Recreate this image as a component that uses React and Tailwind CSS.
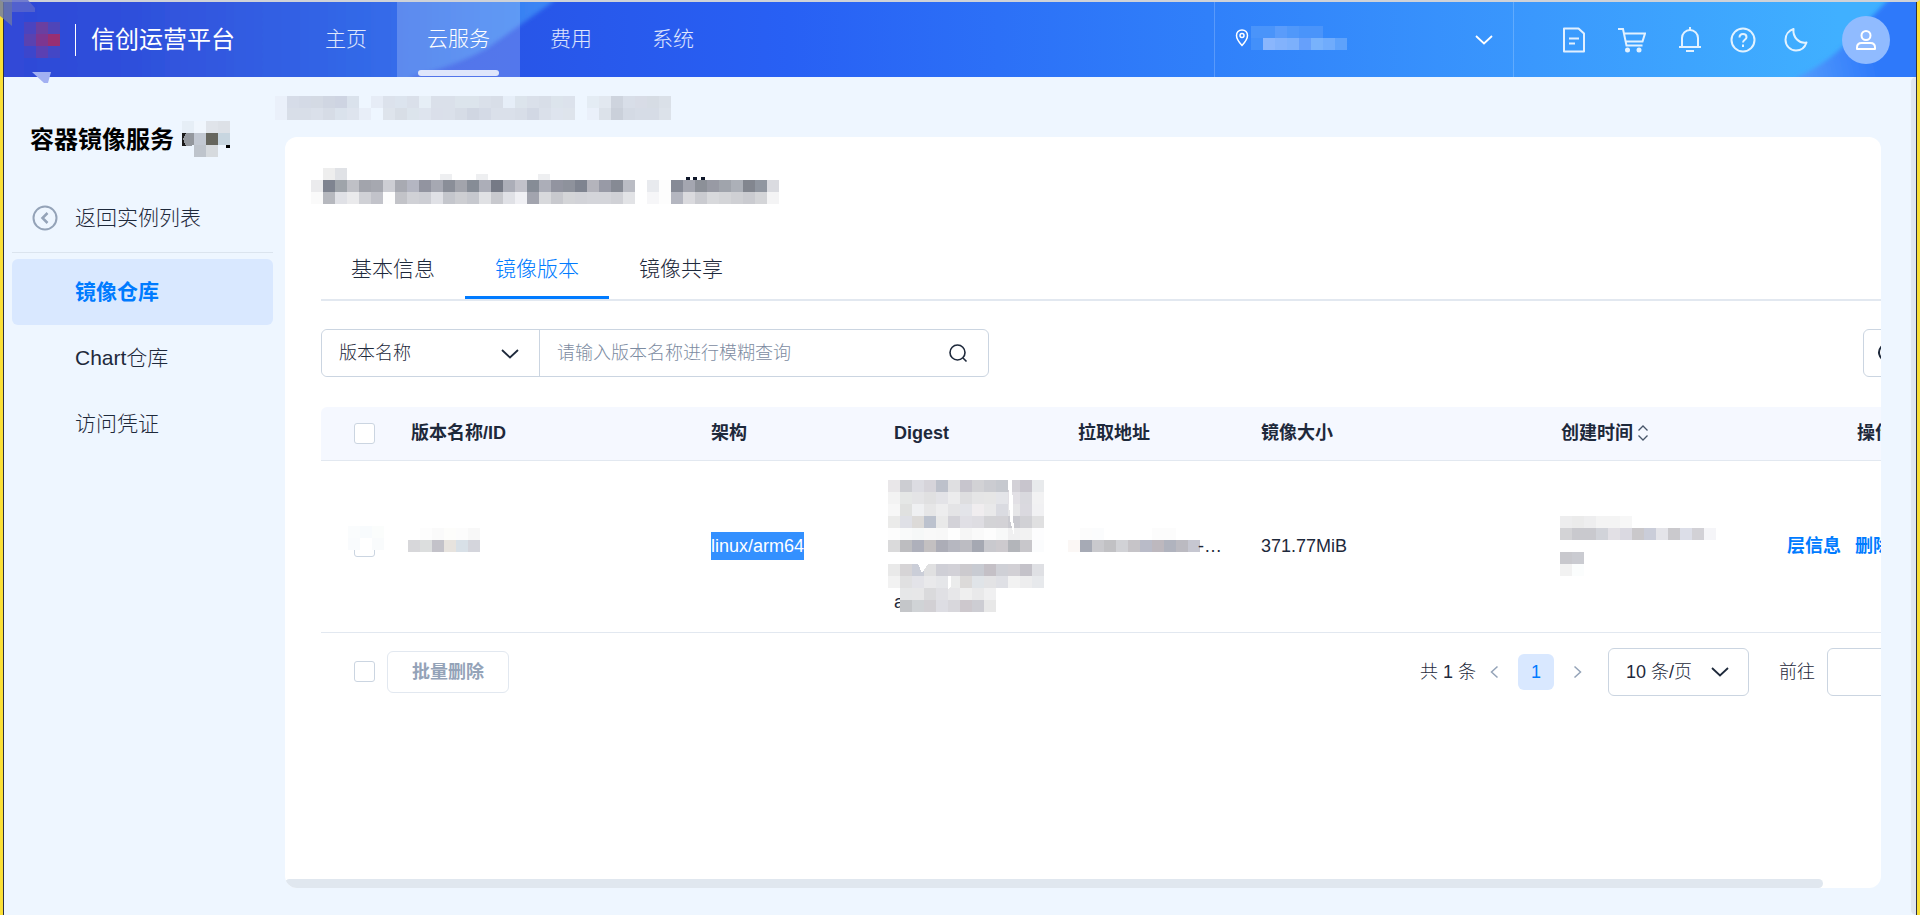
import { useState } from 'react';

const CELL = 12;

const LOGO = [
  '4a44c0 6a3fa0 4f45b8',
  '5a42b0 7d3690 982f72',
  '3c46cc 5b40b2 4347c6',
];

const REGION = [
  '4a94fa 4a94fa 5a9cfb 5098fa 4a94fa 4a94fa . .',
  '4390fa 8ab6fd 82b2fc 7cb0fc 66a0fb 78b2fc 70acfc 5ea2fb',
];

const SERVICE_NAME = [
  'e6eef6 f0f6fd e0e4ea dde1e7',
  '94989e c2c8d2 66665e c8d6e0',
  '. bec4cc d6dade .',
];

const CRUMBS = [
  'eaf0fa d6dce8 d4dae6 d4dae4 d0d6e2 ced4e2 dae2ec . e6ecf6 dce2ec dce4ee dae0ea e6eef6 dae0ea dae0ea dce4ec dce4ec dae0ea d8dee8 e6eef8 dce4ec dae0ea d8dee8 dce4ec dce2ec . e4ecf4 e2e8f0 ced4de d8dee8 d8dce6 d6dce4 dae0e8',
  'eaf0fa d8dee8 d8dee8 dae0ea d6dce6 dae2ec dee4ee e8eef8 . dee4ec d8dee6 dce4ec dee4ee dadfea dae0ea d6dce6 d0d6e2 d4dae6 dae0ea dae0ea d8dee8 d2d8e4 dae0ea dee4ee dee4ec . eaf0fa dce2ea cad0da d4dae4 d6dce6 d6dce6 dce2ea',
];

const TITLE = [
  '. eeeeee e0e2e6 . . . . . . . . . . . . . . . . . . . . . . . . . . . . . . . . . . . .',
  'ebebed 7f8490 9fa4aa bfc0c6 a2a4ac a6a8b0 cdced4 a8aab2 b4b6c2 9294a0 a6a8b2 8a8e98 a2a4ac 868c96 acaeb8 767a86 acaeb8 c2c2ca 868c96 acaeb8 9294a0 8e929c 7f8490 b4b4bc 989aa6 868a94 babcc4 . e8eaee fdfdfd 868a96 a4a6b0 8c9098 989aa4 a0a4ac acb0b8 82868f 9096a0 dadbe0',
  'fafafa b6b8be e0e1e6 eaeaec d0d1d6 c2c3ca fdfdfd c2c3c8 d0d1d6 cdced4 e0e1e6 c4c6cc cdced2 c6c8ce e0e1e4 c8c9ce e0e1e6 f0f0f4 a2a4ae d8d9dc c8c9ce d4d5d8 d2d3d8 d4d5da d4d5da d0d1d6 e2e3e6 . f6f6f8 fdfdfd b4b6c0 dadade cacbd0 d8d9dc d4d5d8 cfd0d4 cacbd0 d4d5d8 f4f4f5',
];

const ROW_CHECK = ['fafcfd f8fbfd fbfdfc', 'f9fbfd ffffff f9fbfc'];

const VERSION = [
  '. fdfdfd fafafa fdfdfb fcfcfc f8f8f8',
  'd7d7da dcdede c3c2c9 e7e3de d8e0e7 d4d5dc',
  '. . . . . .',
];

const DIGEST = [
  'e9e7e9 cccdd2 dcdce2 d6d4da bdc1cb dfdfe1 c7c5cd d2d2d5 cbccd1 c6c9cf d3d1d7 c8c5cd e8eaec',
  'f3f3f3 e5e7e6 e4e4e6 e0e0e1 e3e3e7 ececed dedee0 e5e5e6 e6e6e6 e4e5e9 e2e0e5 d9d9de f2f2f3',
  'f7f7f7 e0e1e0 eff0f2 e6e6e7 ededee e4e4e6 e3e4e9 f0edef e9e9ea dadbe1 e6e6e8 dad9df f1f1f3',
  'ebebea dfe0e6 dcdad8 bcc2ce e9e9e9 d3d2d8 e0dfe5 dedde2 d3d3d6 d3d2d6 cacad0 d1d1d5 e0e0e1',
  'fdfdfd f9fafa f6f8f8 f9f9f9 f8f8f8 fefefe f6f6f6 fafafa fdfdfd f8f9f9 f0f0f1 f2f2f2 fdfdfe',
  'dadadb bdbdc0 aeb0bb c3c0c1 acadb7 b6b7c0 bcbcc2 a5a8b2 c9c9ce cdcace b3b5ba c8c7cb fbfcfd',
  '. . . . . . . . . . . . .',
  'e9e9e9 d6d4d6 cbced8 e0e0e1 cfcfd6 d2d1d7 cccace c8cbd2 c4c0c6 cfd0d6 d2d0d5 c4c2c9 dfe0e4',
  'f2f2f2 e0e0e1 e3e3e8 e9e9eb e5e6e9 ebecec dcdad9 e0e4e8 e3e3e5 dfe0e5 f2f2f2 ededee e7e9ec',
  '. e6e7e8 e7e7e8 dadadc e0e0e4 e7e7e9 efefef e9e9ea f0f0f1 . . . .',
  '. c4c6c9 d0d3d6 d2d0d4 dddde3 d8d7dc cdc8cd cdcdd3 e8e8e8 . . . .',
];

const ADDRESS = [
  '. fcfcfc fbfcfd . . . . fcfcfc fcfcfc . .',
  'fbf7f5 a6aab5 c9c9cd c1c1c4 d1d2d6 c6c4c8 b9bbc8 bdb8be b0b3be bbbac1 c6c7d1',
  '. . . . . . . . . . .',
];

const CREATED = [
  'ededee ebebeb eeeeef f4f4f4 f4f4f4 f7f7f7 . . . . . . .',
  'd3d3d6 c9c9ce c9c9ce d1d3d9 e2e0e5 dad9e1 cac8cb cacdd9 e4e4e9 cac9cd dcdee8 d2d1d6 f5f5f8',
  '. . . . . . . . . . . . .',
  'c8c8cd cacbd1 . . . . . . . . . . .',
  'f2f2f2 fbfdfd . . . . . . . . . . .',
];

/* Privacy blur drawn as a grid of flat tiles, "." leaves a hole */
function Mosaic({ rows, className = '', children }) {
  const grid = rows.map(r => r.split(' '));
  const w = grid[0].length * CELL;
  const h = grid.length * CELL;
  return (
    <svg width={w} height={h} viewBox={`0 0 ${w} ${h}`} shapeRendering="crispEdges" aria-hidden="true" className={`shrink-0 ${className}`}>
      {grid.map((cells, y) =>
        cells.map((c, x) => c !== '.' && (
          <rect key={`${x}-${y}`} x={x * CELL} y={y * CELL} width={CELL} height={CELL} fill={`#${c}`} />
        ))
      )}
      {children}
    </svg>
  );
}

function Icon({ w = 26, h = 26, sw = 2, className = '', children }) {
  return (
    <svg width={w} height={h} viewBox={`0 0 ${w} ${h}`} fill="none" stroke="currentColor" strokeWidth={sw} aria-hidden="true" className={`shrink-0 ${className}`}>
      {children}
    </svg>
  );
}

const Chevron = ({ className = '' }) => (
  <Icon w={18} h={12} sw={1.8} className={className}><path d="M1 2 9 9.500 17 2" /></Icon>
);

function Checkbox({ label }) {
  return (
    <input
      type="checkbox"
      aria-label={label}
      className="block size-[21px] shrink-0 appearance-none rounded-[3px] border border-[#cbd5e1] bg-white checked:border-[#007bff] checked:bg-[#007bff]"
    />
  );
}

function HeaderBackdrop() {
  return (
    <svg className="absolute inset-0 h-full w-full" viewBox="0 0 1910 75" preserveAspectRatio="none" aria-hidden="true">
      <defs>
        <linearGradient id="base">
          <stop offset="0.22" stopColor="#2852e4" />
          <stop offset="0.41" stopColor="#2860f4" />
          <stop offset="0.63" stopColor="#3080fa" />
          <stop offset="0.8" stopColor="#3a98fd" />
          <stop offset="0.96" stopColor="#40b0ff" />
        </linearGradient>
        <linearGradient id="left">
          <stop offset="0" stopColor="#3048d6" />
          <stop offset="0.25" stopColor="#2f4fdb" />
          <stop offset="0.7" stopColor="#346be9" />
          <stop offset="1" stopColor="#3b88f6" />
        </linearGradient>
        <linearGradient id="right" gradientUnits="userSpaceOnUse" x1="1800" y1="75" x2="1870" y2="60">
          <stop offset="0" stopColor="#5098fc" />
          <stop offset="1" stopColor="#2e79fa" />
        </linearGradient>
        <filter id="soft" x="-5%" y="-5%" width="110%" height="110%">
          <feGaussianBlur stdDeviation="2" />
        </filter>
      </defs>
      <rect width="1910" height="75" fill="url(#base)" />
      <path d="M-20-10h576l-8 10-62 44q-28 18-80 31v10H-20z" fill="url(#left)" filter="url(#soft)" />
      <path d="M1890-10h40v95h-146l8-10q34-16 56-42z" fill="url(#right)" filter="url(#soft)" />
    </svg>
  );
}

const NAV = ['主页', '云服务', '费用', '系统'];

function Header() {
  const [active, setActive] = useState('云服务');
  return (
    <header className="relative flex h-[75px] shrink-0 text-[21px] text-white">
      <HeaderBackdrop />
      <div className="relative flex items-center pl-5">
        <Mosaic rows={LOGO} />
        <span className="mr-[15px] ml-[15px] h-8 w-px bg-white" />
        <span className="text-2xl">信创运营平台</span>
      </div>
      <nav className="relative ml-[60px] flex font-light">
        {NAV.map(n => (
          <a
            key={n}
            href="#"
            onClick={() => setActive(n)}
            className={`relative flex items-center px-[30px] ${n === active ? 'bg-white/20 text-white' : 'text-white/85'}`}
          >
            {n}
            {n === active && <span className="absolute bottom-px left-[21px] right-[21px] h-1.5 rounded-[3px] bg-[#dfe6fb]" />}
          </a>
        ))}
      </nav>

      <button className="relative ml-auto flex w-[300px] items-center border-x border-white/20 pr-5 pl-5" aria-label="区域">
        <Icon w={14} h={18} className="mb-1">
          <path d="M7 1C3.700 1 1.500 3.400 1.500 6.500 1.500 10.500 7 16.500 7 16.500s5.500-6 5.500-10C12.500 3.400 10.300 1 7 1z" strokeWidth="1.500" />
          <circle cx="7" cy="6.500" r="2" strokeWidth="1.500" />
        </Icon>
        <Mosaic rows={REGION} className="mb-1 ml-0.5" />
        <Chevron className="ml-auto" />
      </button>

      <div className="relative flex items-center pr-[26px] pl-12 text-white/85">
        <div className="flex gap-8">
          <button aria-label="文档">
            <Icon w={24}>
              <path d="M2 1.500h14.500l5.500 5V24.500H2z" strokeLinejoin="round" />
              <path d="M7 11.500h10M7 16.500h6" />
            </Icon>
          </button>
          <button aria-label="购物车">
            <Icon w={28}>
              <path d="M0 2h5l3.500 16.500h16M5.800 6.500H27l-2.500 8H8" />
              <circle cx="9.500" cy="23" r="2.500" fill="currentColor" stroke="none" />
              <circle cx="21" cy="23" r="2.500" fill="currentColor" stroke="none" />
            </Icon>
          </button>
          <button aria-label="通知">
            <Icon w={24}>
              <path d="M1 20h22M4 20v-9a8 8 0 0 1 16 0v9M12 0v3M8 24h8" />
            </Icon>
          </button>
        </div>
        <div className="ml-7 flex gap-7">
          <button aria-label="帮助">
            <Icon>
              <circle cx="13" cy="13" r="11.500" />
              <path d="M9.500 10.500c0-2.200 1.500-3.500 3.500-3.500s3.500 1.300 3.500 3.200c0 2.500-3.500 2.600-3.500 5.300M13 17.500V20" />
            </Icon>
          </button>
          <button aria-label="深色模式">
            <Icon w={24}>
              <path d="M9.500 2C4.800 3.500 1.500 7.700 1.500 12.700c0 6 4.700 10.800 10.500 10.800 5 0 9-3.300 10.500-8-7 1.500-14-5-13-13.500z" strokeLinejoin="round" />
            </Icon>
          </button>
        </div>
        <button aria-label="用户" className="ml-[34px] flex size-12 items-center justify-center rounded-full bg-[#90bbff] text-white">
          <Icon w={20} h={20}>
            <circle cx="10" cy="5.500" r="4.500" />
            <path d="M1 19v-1.500c0-3 2-4.500 4.500-4.500h9c2.500 0 4.500 1.500 4.500 4.500V19z" strokeLinejoin="round" />
          </Icon>
        </button>
      </div>
    </header>
  );
}

const MENU = ['镜像仓库', 'Chart仓库', '访问凭证'];

function Sidebar() {
  return (
    <aside className="w-[269px] shrink-0 pl-2 text-[21px] leading-7 text-[#1e293b]">
      <h1 className="flex h-[90px] items-end pl-[18px] text-2xl font-bold text-black">
        <span className="mb-[11px]">容器镜像服务</span>
        <Mosaic rows={SERVICE_NAME} className="mb-2.5 ml-2">
          <path d="M0 12h6l-5 6 5 7H0z" fill="#1a1a1a" />
          <path d="M4 12h6l-6 6 6 7H4l-3-7z" fill="#94989e" />
          <path d="M44 24h4v3h-4z" fill="#000" />
        </Mosaic>
      </h1>
      <a href="#" className="flex h-[86px] items-center border-b border-[#dbe4ee] pt-4 pl-5 font-light">
        <Icon className="text-[#94a3b8]">
          <circle cx="13" cy="13" r="11.500" />
          <path d="m15.500 8-5 5 5 5" strokeWidth="2.500" />
        </Icon>
        <span className="ml-[17px]">返回实例列表</span>
      </a>
      <nav className="mt-1.5">
        {MENU.map((m, i) => (
          <a
            key={m}
            href="#"
            className={`flex h-[66px] items-center rounded-md pl-[63px] ${i === 0 ? 'bg-[#d9e8ff] font-bold text-[#007bff]' : 'font-light'}`}
          >
            {m}
          </a>
        ))}
      </nav>
    </aside>
  );
}

const TABS = ['基本信息', '镜像版本', '镜像共享'];

function Tabs() {
  const [tab, setTab] = useState('镜像版本');
  return (
    <div role="tablist" className="flex h-[62px] border-b-2 border-[#e2e8f0] text-[21px] font-light">
      {TABS.map(t => (
        <button
          key={t}
          role="tab"
          aria-selected={t === tab}
          onClick={() => setTab(t)}
          className={`border-b-[3px] px-[30px] pt-1 ${t === tab ? 'border-[#007bff] text-[#007bff]' : 'border-transparent'}`}
        >
          {t}
        </button>
      ))}
    </div>
  );
}

function Toolbar() {
  return (
    <div className="mt-7 flex h-12 font-light">
      <div className="flex w-[668px] rounded-md border border-[#cbd5e1]">
        <div className="relative w-[218px] border-r border-[#cbd5e1]">
          <select aria-label="查询字段" className="h-full w-full appearance-none rounded-l-md bg-white px-[17px] outline-none">
            <option>版本名称</option>
          </select>
          <Chevron className="pointer-events-none absolute top-[18px] right-5" />
        </div>
        <input
          type="text"
          aria-label="版本名称"
          placeholder="请输入版本名称进行模糊查询"
          className="min-w-0 flex-1 bg-transparent px-[17px] outline-none placeholder:text-[#7c8ba1]"
        />
        <button aria-label="查询" className="px-5">
          <Icon w={20} h={20} sw={1.6}>
            <circle cx="9.500" cy="9.500" r="7.500" />
            <path d="m15 15 3.500 3.500" />
          </Icon>
        </button>
      </div>
      <button aria-label="刷新" className="ml-auto flex w-12 items-center justify-center rounded-md border border-[#cbd5e1]">
        <Icon w={20} h={20}>
          <path d="M17 5.500A8 8 0 1 0 18 10M17.500 1.500v4.500H13" />
        </Icon>
      </button>
    </div>
  );
}

function VersionTable() {
  return (
    <table className="mt-[30px] w-full table-fixed border-collapse text-left">
      <colgroup>
        <col className="w-[72px]" />
        <col className="w-[300px]" />
        <col className="w-[183px]" />
        <col className="w-[184px]" />
        <col className="w-[183px]" />
        <col className="w-[300px]" />
        <col />
        <col className="w-[142px]" />
      </colgroup>
      <thead>
        <tr className="h-[53px] border-b border-[#e2e8f0] bg-[#f5f8ff] font-bold">
          <th className="rounded-tl-md pl-[33px]"><Checkbox label="全选" /></th>
          <th className="px-[18px]">版本名称/ID</th>
          <th className="px-[18px]">架构</th>
          <th className="px-[18px]">Digest</th>
          <th className="px-[18px]">拉取地址</th>
          <th className="px-[18px]">镜像大小</th>
          <th className="px-[18px]">
            <button className="flex items-center font-bold">
              创建时间
              <Icon w={12} h={16} sw={1.3} className="ml-1 text-[#475569]">
                <path d="M1.500 5.500 6 1l4.500 4.500M1.500 10.500 6 15l4.500-4.500" />
              </Icon>
            </button>
          </th>
          <th className="px-[18px] text-right">操作</th>
        </tr>
      </thead>
      <tbody>
        <tr className="h-[172px] border-b border-[#e2e8f0]">
          <td className="pl-[33px]">
            <div className="relative">
              <Checkbox label="选择版本" />
              <Mosaic rows={ROW_CHECK} className="pointer-events-none absolute -top-2.5 -left-1.5" />
            </div>
          </td>
          <td className="px-[15px]"><Mosaic rows={VERSION} /></td>
          <td className="px-[18px]"><span className="bg-[#3390ff] py-1 text-white">linux/arm64</span></td>
          <td className="px-3">
            <div className="relative">
              <span className="absolute bottom-0 left-1.5 leading-5">a</span>
              <Mosaic rows={DIGEST} className="relative">
                <path d="M120 0h4l1 30 1 26-4-16z" fill="#fff" />
                <path d="M30 84h10l-6 9zM60 96h3v10l-3 3z" fill="#fff" />
              </Mosaic>
            </div>
          </td>
          <td>
            <div className="flex items-center pl-2">
              <Mosaic rows={ADDRESS} />
              <span className="-ml-0.5">-…</span>
            </div>
          </td>
          <td className="px-[18px]">371.77MiB</td>
          <td className="px-[17px]"><Mosaic rows={CREATED} /></td>
          <td className="px-5">
            <div className="flex justify-end gap-3.5 font-bold whitespace-nowrap text-[#007bff]">
              <a href="#">层信息</a>
              <a href="#">删除</a>
            </div>
          </td>
        </tr>
      </tbody>
    </table>
  );
}

function Pagination() {
  return (
    <div className="mt-[15px] flex h-12 items-center font-light">
      <div className="flex items-center gap-3 pl-[33px]">
        <Checkbox label="全选当前页" />
        <button disabled className="h-[42px] rounded-md border border-[#e2e8f0] px-6 font-bold text-[#94a3b8]">批量删除</button>
      </div>
      <span className="ml-auto">共 1 条</span>
      <button aria-label="上一页" className="ml-3 text-[#94a3b8]">
        <Icon w={12} h={14} sw={1.5}><path d="M9.500 1.500 3.500 7l6 5.500" /></Icon>
      </button>
      <button className="mx-[18px] size-9 rounded-md bg-[#d9e8ff] text-[#007bff]">1</button>
      <button aria-label="下一页" className="text-[#94a3b8]">
        <Icon w={12} h={14} sw={1.5}><path d="m2.500 1.500 6 5.500-6 5.500" /></Icon>
      </button>
      <div className="relative ml-6 h-12 w-[141px]">
        <select aria-label="每页条数" className="h-full w-full appearance-none rounded-md border border-[#cbd5e1] bg-white px-[17px] outline-none">
          <option>10 条/页</option>
        </select>
        <Chevron className="pointer-events-none absolute top-[18px] right-5" />
      </div>
      <label htmlFor="goto" className="mr-3 ml-[30px]">前往</label>
      <input id="goto" type="text" className="h-12 w-[84px] rounded-md border border-[#cbd5e1] px-3 outline-none" />
    </div>
  );
}

export default function App() {
  return (
    <div className="flex min-h-screen flex-col border-x-[3px] border-t-2 border-x-[#fbe036] border-t-[#cfd2d8] bg-[#eef6ff] font-['Liberation_Sans','Noto_Sans_CJK_SC',sans-serif] text-lg text-[#1e293b]">
      <div className="relative flex flex-1 flex-col border-x border-[#2d2f3f]">
        <Header />
        <div className="flex flex-1">
          <Sidebar />
          <main className="flex min-w-0 flex-1 flex-col pr-[30px] pb-[27px] pl-3">
            <div className="-ml-2.5 flex h-[60px] items-center pt-0.5">
              <Mosaic rows={CRUMBS} />
            </div>
            <section className="flex flex-1 flex-col overflow-hidden rounded-xl bg-white">
              <div className="flex-1 overflow-x-auto [scrollbar-width:none]">
                <div className="min-w-[1656px] pr-[30px] pl-9">
                  <div className="flex h-[102px] items-center">
                    <Mosaic rows={TITLE} className="-mt-1 -ml-2.5">
                      <path d="M165 6h12v6h-12zM129 6h12v6h-12zM227 6h12v6h-12z" fill="#eeeff1" />
                      <path d="M375 9h4v3h-4zM382 9h4v3h-4zM390 9h4v3h-4z" fill="#0f172a" />
                    </Mosaic>
                  </div>
                  <Tabs />
                  <Toolbar />
                  <VersionTable />
                  <Pagination />
                </div>
              </div>
              <div className="mr-[58px] h-[9px] rounded-full bg-[#e0e7ef]" />
            </section>
          </main>
          <div className="w-[5px] shrink-0 rounded-l-md bg-[#e0e7f0]" />
        </div>
        {/* Frame ornaments around the logo */}
        <svg className="pointer-events-none absolute -top-0.5 -left-1" width="60" height="86" viewBox="0 0 60 86" aria-hidden="true">
          <path d="M0 0h12v26L0 16z" fill="#6b78a8" opacity="0.8" />
          <path d="M12 0h16l7 8v4H12z" fill="#5a68cc" opacity="0.8" />
          <path d="M32 72h19l-3 11h-4z" fill="#a2b0f2" />
        </svg>
      </div>
    </div>
  );
}
